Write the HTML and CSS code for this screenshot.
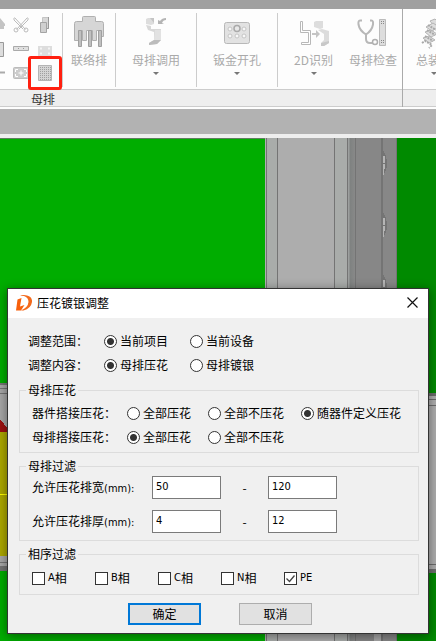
FILE: index.html
```html
<!DOCTYPE html>
<html lang="zh-CN">
<head>
  <meta charset="UTF-8" />
  <meta name="viewport" content="width=device-width, initial-scale=1.0"/>
  <title>压花镀银调整</title>
  <link rel="stylesheet" href="styles.css">
</head>
<body>

  <header class="ribbon">
    <div class="panel">
      <div class="tools">
        <div class="small-tools">
          <button class="small" aria-label="主页"><svg viewBox="0 0 16 16"><path d="M4 9l7-8 5 6v2h-1v3H7V9z" fill="#c4c4c4"/></svg></button>
          <button class="small" aria-label="剪切"><svg viewBox="0 0 16 16" fill="none" stroke="#bbb"><path d="M1.500.5l11 12M14.500.5l-11 12M1 1v2l9 9M15 1v2l-9 9"/><circle cx="3" cy="13" r="2"/><circle cx="13" cy="13" r="2"/></svg></button>
          <button class="small" aria-label="接头"><svg viewBox="0 0 16 16"><path d="M5.500.5h6v11h-6z" fill="#d8d8d8" stroke="#c4c4c4"/><path d="M11.500 0v11.500H9" fill="none" stroke="#999"/><path d="M3.500 5.500h6v10h-6z" fill="#d0d0d0" stroke="#a4a4a4"/></svg></button>

          <button class="small" aria-label="竖排"><svg viewBox="0 0 16 16"><path d="M10.500 1.500h4v14h-4z" fill="#ddd" stroke="#999"/></svg></button>
          <button class="small" aria-label="横排"><svg viewBox="0 0 16 16"><path d="M.5 5.500h15v4H.5z" fill="#e0e0e0" stroke="#aaa"/><path d="M5 7.500h1m4 0h1" stroke="#999"/></svg></button>
          <button class="small" aria-label="端板"><svg viewBox="0 0 16 16"><path d="M1 5h14v10H1z" fill="#ddd"/><path d="M3 7.500h2M11 7.500h2M3 12.500h2M11 12.500h2" stroke="#f4f4f4" stroke-width="2"/></svg></button>

          <button class="small" aria-label="直线"><svg viewBox="0 0 16 16"><path d="M2 7.500h14" stroke="#aaa" stroke-width="2"/></svg></button>
          <button class="small" aria-label="添加"><svg viewBox="0 0 16 16"><rect x=".5" y="2.500" width="15" height="11" rx="1" fill="#ccc" stroke="#bbb"/><path d="M8 5.500v5M5.500 8h5M2.500 7V4.500H5M13.500 7V4.500H11M2.500 9v2.500H5M13.500 9v2.500H11" fill="none" stroke="#fff"/></svg></button>
          <button class="small active" aria-label="压花"><svg viewBox="0 0 16 16"><defs><pattern id="dots" width="2" height="2" patternUnits="userSpaceOnUse"><path d="M0 0h2v2H0z" fill="#d4d4d4"/><path d="M1 0h1v1H1z" fill="#a0a0a0"/></pattern></defs><path d="M1.500.5h13v15h-13z" fill="url(#dots)" stroke="#b4b4b4"/></svg></button>
        </div>

        <div class="group narrow">
          <button class="big">
            <svg viewBox="0 0 36 36"><path d="M3.500 27.500V10.500q0-2 2-2h6v-4q0-1 1-1h11q1 0 1 1v4h6q2 0 2 2v13h-3v-6h-4v10h-4v-10h-6v10h-4v-10h-4v10z" fill="#d6d6d6" stroke="#b0b0b0"/><path d="M7.500 17.500h3v16h-3zM17.500 17.500h3v16h-3zM27.500 17.500h3v16h-3z" fill="#c0c0c0" stroke="#a0a0a0"/></svg>
            <span>联络排</span>
          </button>
        </div>
        <div class="group">
          <button class="big">
            <svg viewBox="0 0 36 36"><path d="M8 6l2-1h6v6l-3 1-5-1z" fill="#ddd"/><path d="M12 5h4v5z" fill="#c4c4c4"/><path d="M20 11V7l2 1q2-3 6-3v2q-3 0-4 3l2 1z" fill="#b4b4b4"/><path d="M8 12l5 1v3h10v11l-4 4-8 1v-2l5-3v-8l-6-2z" fill="#d8d8d8"/><path d="M17 17h6v10h-7z" fill="#e2e2e2"/><path d="M16 27h7l-4 4-8 1v-2z" fill="#bcbcbc"/></svg>
            <span>母排调用</span>
            <i class="arrow"></i>
          </button>
        </div>
        <div class="group">
          <button class="big">
            <svg viewBox="0 0 36 36"><rect x="5.500" y="9.500" width="25" height="21" rx="2" fill="#e2e2e2" stroke="#b8b8b8"/><g fill="#f8f8f8" stroke="#c4c4c4"><circle cx="11" cy="16" r="2"/><circle cx="25" cy="16" r="2"/><circle cx="11" cy="23" r="2"/><circle cx="18" cy="23" r="2"/><circle cx="25" cy="23" r="2"/></g><circle cx="18" cy="15.500" r="3" fill="#e8e8e8" stroke="#aaa" stroke-width="1.500"/></svg>
            <span>钣金开孔</span>
            <i class="arrow"></i>
          </button>
        </div>
        <div class="group last">
          <button class="big">
            <svg viewBox="0 0 36 36"><path d="M4.500 8.500h2v9h8v14h-9v-2h7v-10h-8z" fill="#fff" stroke="#b8b8b8"/><path d="M16 20h4v-3l4 4-4 4v-3h-4z" fill="#c4c4c4"/><path d="M18 9l2-1h7v7l-3 1-6-2z" fill="#ddd"/><path d="M22 17l4-1 7 2v12l-5 3h-3v-3l3-3v-6z" fill="#dcdcdc"/><path d="M25 30l8-2v2l-5 3h-3z" fill="#c8c8c8"/></svg>
            <span>2D识别</span>
            <i class="arrow"></i>
          </button>
          <button class="big">
            <svg viewBox="0 0 36 36" fill="none"><path d="M7 7.500H5q-2 0-1.500 4 1 6 7.500 10 6-4 7-10 .5-4-1.500-4H15M11 21v5q0 4 4 4h2" stroke="#b8b8b8" stroke-width="2"/><circle cx="20" cy="29" r="2.500" stroke="#b0b0b0" stroke-width="1.500"/><path d="M24.500 6.500h6v26h-6z" fill="#ddd" stroke="#bbb"/><path d="M26 8.500h1m1 0h1m-3 2h1m1 0h1m-3 17h1m1 0h1m-3 2h1m1 0h1" stroke="#888"/></svg>
            <span>母排检查</span>
          </button>
        </div>
      </div>
      <div class="panel-name">母排</div>
    </div>

    <div class="panel next">
      <div class="tools">
        <button class="big cut">
          <svg viewBox="0 0 36 36"><g fill="#ddd" stroke="#b4b4b4"><path d="M14 8l5-2 4 4-5 3z"/><path d="M10 14l7-4 6 4-7 4zM9 19l6-2 6 4-6 3zM7 25l6-2 6 4-6 3z"/></g><path d="M12 12l8 5M11 17l8 5M9 23l8 5M6 30l3-2 7 4-3 3" stroke="#a8a8a8" stroke-width="2" stroke-dasharray="2 1" fill="none"/></svg>
          <span>总装</span>
          <i class="arrow"></i>
        </button>
      </div>
      <div class="panel-name"></div>
    </div>
  </header>

  <div class="strip"></div>

  <main class="canvas">
    <!-- cabinet model behind the dialog -->
    <svg class="model" viewBox="0 0 436 503" preserveAspectRatio="xMinYMin slice" shape-rendering="crispEdges">
      <defs>
        <linearGradient id="fold"><stop offset="0" stop-color="#a4a7a6"/><stop offset=".3" stop-color="#7f8281"/><stop offset="1" stop-color="#8a8a8a"/></linearGradient>
        <g id="hinge"><path d="M1 0q4 6 4 13t-4 13z" fill="#747474"/><path d="M1 6h2v7H1zM1 14h2l-1 11H1z" fill="#b5b5b5"/></g>
      </defs>
      <path d="M0 0h265v503H0z" fill="#00ad00"/>
      <path d="M0 0h265v1H0z" fill="#5e7d5e"/>
      <path d="M265 0h132v503H265z" fill="#878787"/>
      <path d="M267 0h10v503h-10zM335 0h12v503h-12z" fill="#a9acaa"/>
      <path d="M278 0h56v503h-56z" fill="#adadad"/>
      <path d="M348 0h8v503h-8z" fill="url(#fold)"/>
      <path d="M265 0h1v503h-1z" fill="#b0b0b0"/>
      <path d="M266 0h1v503h-1zM277 0h1v503h-1zM334 0h1v503h-1zM347 0h1v503h-1zM355 0h1v503h-1zM381 0h2v503h-2zM396 0h1v503h-1z" fill="#747474"/>
      <path d="M374 490h7v13h-7z" fill="#a8a8a8"/>
      <use href="#hinge" x="382" y="12"/>
      <use href="#hinge" x="382" y="74"/>
      <use href="#hinge" x="382" y="136"/>
      <path d="M397 0h39v503h-39z" fill="#008a00"/>
      <path d="M0 245h9v188H0z" fill="#a8a8a8"/>
      <path d="M0 245h9v2H0zM0 250h9v1H0zM0 255h9v1H0zM0 424h9v1H0zM0 428h9v5H0z" fill="#747474"/>
      <path d="M0 281l8 10v4H0z" fill="#9c1010"/>
      <path d="M0 294h9v124H0z" fill="#aca800"/>
      <path d="M0 356h9v1H0z" fill="#ff0"/>
      <path d="M428 255h8v180h-8z" fill="#adadad"/>
      <path d="M428 255h8v3h-8zM428 261h8v1h-8zM428 267h8v1h-8zM428 426h8v1h-8zM428 431h8v4h-8z" fill="#6c6c6c"/>
    </svg>

    <form class="dialog" role="dialog" aria-labelledby="dialogTitle">
      <div class="titlebar">
        <svg class="logo" viewBox="0 0 16 16"><path d="M1.500 4.500L5.500 3 4 11.500 8.500 10 5 15.500H0z" fill="#f8600c"/><path d="M4 1q3-1.500 7-.5 5.500 1.500 5 6.500-1 6.500-8.500 8.500H5q7-3 7.500-8.500Q12.500 2.500 8 1z" fill="#f36a1c"/></svg>
        <h1 id="dialogTitle">压花镀银调整</h1>
        <button type="button" class="close" aria-label="关闭"><svg viewBox="0 0 11 11"><path d="M.5.5l10 10M10.500.5l-10 10" stroke="#111" stroke-width="1.200"/></svg></button>
      </div>

      <div class="content">
        <div class="row top" role="radiogroup" aria-labelledby="scopeName">
          <span class="name" id="scopeName">调整范围：</span>
          <label><input type="radio" name="scope" checked>当前项目</label>
          <label><input type="radio" name="scope">当前设备</label>
        </div>
        <div class="row top" role="radiogroup" aria-labelledby="kindName">
          <span class="name" id="kindName">调整内容：</span>
          <label><input type="radio" name="kind" checked>母排压花</label>
          <label><input type="radio" name="kind">母排镀银</label>
        </div>

        <fieldset class="emboss">
          <legend>母排压花</legend>
          <div class="row" role="radiogroup" aria-labelledby="deviceName">
            <span class="name" id="deviceName">器件搭接压花：</span>
            <label><input type="radio" name="device">全部压花</label>
            <label><input type="radio" name="device">全部不压花</label>
            <label><input type="radio" name="device" checked>随器件定义压花</label>
          </div>
          <div class="row" role="radiogroup" aria-labelledby="busbarName">
            <span class="name" id="busbarName">母排搭接压花：</span>
            <label><input type="radio" name="busbar" checked>全部压花</label>
            <label><input type="radio" name="busbar">全部不压花</label>
          </div>
        </fieldset>

        <fieldset class="sizes">
          <legend>母排过滤</legend>
          <div class="range">
            <label for="widthMin">允许压花排宽<span class="latin">(mm):</span></label>
            <input type="text" id="widthMin" value="50">
            <span class="dash">-</span>
            <input type="text" value="120" aria-label="最大排宽">
          </div>
          <div class="range">
            <label for="thickMin">允许压花排厚<span class="latin">(mm):</span></label>
            <input type="text" id="thickMin" value="4">
            <span class="dash">-</span>
            <input type="text" value="12" aria-label="最大排厚">
          </div>
        </fieldset>

        <fieldset class="phases">
          <legend>相序过滤</legend>
          <div class="checks">
            <label><input type="checkbox"><span class="latin">A</span>相</label>
            <label><input type="checkbox"><span class="latin">B</span>相</label>
            <label><input type="checkbox"><span class="latin">C</span>相</label>
            <label><input type="checkbox"><span class="latin">N</span>相</label>
            <label><input type="checkbox" checked><span class="latin">PE</span></label>
          </div>
        </fieldset>

        <div class="actions">
          <button type="button" class="default">确定</button>
          <button type="button">取消</button>
        </div>
      </div>
    </form>
  </main>

</body>
</html>
```

FILE: styles.css
```css
* {
  box-sizing: border-box;
}

body {
  margin: 0;
  min-height: 100vh;
  display: flex;
  flex-direction: column;
  font-family: "Noto Sans CJK SC", sans-serif;
  font-size: 12px;
  line-height: 14px;
  color: #000;
  overflow: hidden;
}

button,
input {
  font: inherit;
  color: inherit;
  margin: 0;
}

svg {
  display: block;
}

/* ribbon */

.ribbon {
  display: flex;
  border-top: 9px solid #a0a0a0;
  background: #fdfdfd;
  overflow: hidden;
}

.panel {
  flex: none;
}

.panel.next {
  flex: 1 0 0;
  min-width: 0;
  border-left: 1px solid #aaa;
}

.tools {
  display: flex;
  height: 80px;
}

.small-tools {
  display: grid;
  grid-template-columns: repeat(3, 16px);
  grid-auto-rows: 16px;
  gap: 8px;
  margin-left: -11px;
  padding: 8px 9px 0 0;
}

.small,
.big {
  border: none;
  padding: 0;
  background: none;
}

.active {
  position: relative;
}

.active::after {
  content: "";
  position: absolute;
  inset: -9px;
  border: 3px solid #ff2010;
  border-radius: 3px;
}

.group {
  display: flex;
  gap: 16px;
  margin: 4px 0 2px;
  padding: 0 16px;
  border-left: 1px solid #ccc;
}

.group.narrow {
  padding: 0 8px;
}

.group.last {
  padding-right: 5px;
}

.big {
  display: flex;
  flex-direction: column;
  align-items: center;
  color: #aaa;
  white-space: nowrap;
}

.big svg {
  width: 36px;
  height: 36px;
  margin-bottom: 4px;
}

.big.cut {
  align-items: flex-start;
  margin: 4px 0 0 13px;
}

.arrow {
  border: 3px solid transparent;
  border-top-color: #777;
  border-bottom: none;
  margin-top: 5px;
}

.cut .arrow {
  margin-left: 15px;
}

.panel-name {
  height: 18px;
  padding-left: 31px;
  border-top: 1px solid #ccc;
  border-bottom: 1px solid #ccc;
  background: #eee;
  line-height: 17px;
  color: #333;
}

.strip {
  height: 31px;
  border-top: 2px solid #fdfdfd;
  border-bottom: 4px solid #eee;
  background: #b2b2b2;
}

/* drawing area */

.canvas {
  flex: 1;
  position: relative;
  overflow: hidden;
}

.model {
  position: absolute;
  width: 100%;
  height: 100%;
}

/* dialog */

.dialog {
  position: absolute;
  top: 150px;
  left: 7px;
  right: 7px;
  border: 1px solid #333;
  background: #f0f0f0;
  box-shadow: 0 2px 10px rgba(0, 0, 0, 0.45);
}

.titlebar {
  display: flex;
  align-items: center;
  height: 29px;
  padding: 0 10px 2px 8px;
  background: #fff;
}

.logo {
  width: 16px;
  height: 16px;
}

.titlebar h1 {
  flex: 1;
  margin: 0 0 0 5px;
  font-size: 12px;
  line-height: 14px;
  font-weight: normal;
}

.close {
  padding: 0;
  border: none;
  background: none;
}

.close svg {
  width: 11px;
  height: 11px;
}

.content {
  padding: 11px 9px 8px 11px;
}

.row {
  display: flex;
  align-items: center;
  gap: 17px;
  height: 24px;
}

.row .name {
  width: 78px;
  white-space: nowrap;
}

.row.top {
  gap: 22px;
  padding-left: 9px;
}

.row.top .name {
  width: 54px;
}

.row label,
.checks label {
  display: flex;
  align-items: center;
  white-space: nowrap;
}

input[type="radio"],
input[type="checkbox"] {
  appearance: none;
  width: 13px;
  height: 13px;
  margin-right: 3px;
  border: 1px solid #333;
  background: #fff;
}

input[type="radio"] {
  border-radius: 50%;
}

input[type="radio"]:checked {
  background: radial-gradient(circle, #333 3px, #fff 4px);
}

input[type="checkbox"]:checked {
  background: #fff url("data:image/svg+xml,%3Csvg xmlns='http://www.w3.org/2000/svg' viewBox='0 0 11 11'%3E%3Cpath d='M1.500 5.500l3 3 5-6' fill='none' stroke='%23444' stroke-width='1.300'/%3E%3C/svg%3E");
}

fieldset {
  min-width: 0;
  margin: 6px 0 0;
  border: 1px solid #dcdcdc;
}

legend {
  height: 14px;
  margin-left: -6px;
  padding: 0 2px;
}

.emboss {
  padding: 4px 12px 3px;
}

.sizes {
  padding: 3px 12px 7px;
}

.phases {
  padding: 5px 12px 4px;
}

.latin {
  font-family: "DejaVu Sans Condensed", "DejaVu Sans", sans-serif;
  font-size: 11px;
}

.range {
  display: grid;
  grid-template-columns: 120px 69px 47px 69px;
  align-items: center;
}

.range + .range {
  margin-top: 11px;
}

.range input {
  width: 100%;
  height: 23px;
  padding: 0 3px 2px;
  border: 1px solid #7a7a7a;
  background: #fff;
  font-family: "DejaVu Sans Condensed", "DejaVu Sans", sans-serif;
  font-size: 11px;
}

.dash {
  text-align: center;
}

.checks {
  display: grid;
  grid-template-columns: repeat(5, 63px);
  height: 24px;
}

.actions {
  display: flex;
  justify-content: center;
  gap: 38px;
  padding: 8px 0 0 2px;
}

.actions button {
  width: 73px;
  height: 22px;
  padding: 0;
  border: 1px solid #adadad;
  background: #e1e1e1;
}

.actions .default {
  border: 2px solid #0078d7;
}
```
